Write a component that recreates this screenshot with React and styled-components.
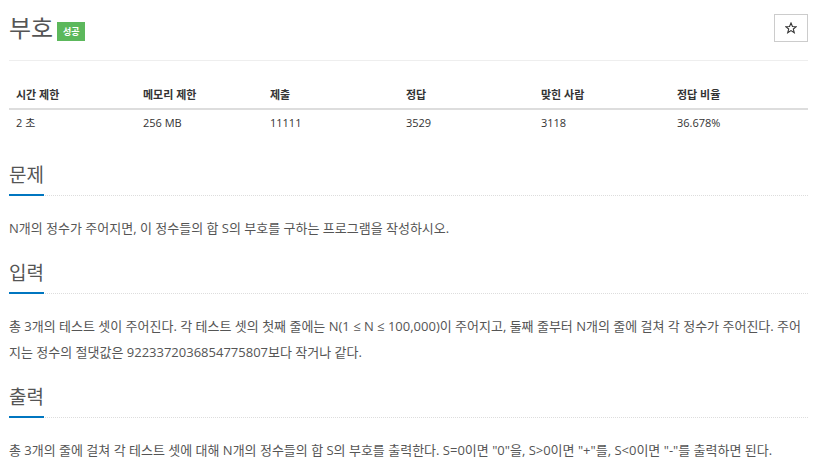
import React from "react";
import styled, { createGlobalStyle } from "styled-components";

const Global = createGlobalStyle`
  html, body { margin: 0; padding: 0; background: #fff; }
  body {
    font-family: "Open Sans", "Noto Sans CJK KR", sans-serif;
    color: #555;
  }
`;

const Page = styled.div`
  padding: 0 9px;
  width: 799px;
`;

const Header = styled.div`
  display: flex;
  align-items: flex-start;
  justify-content: space-between;
  padding-top: 14px;
  height: 46px;
  border-bottom: 1px solid #eee;
`;

const TitleWrap = styled.div`
  display: flex;
  align-items: center;
  gap: 4px;
`;

const Title = styled.h1`
  margin: 0;
  font-size: 24px;
  font-weight: 400;
  line-height: 28px;
  color: #555;
`;

const Badge = styled.span`
  display: inline-flex;
  align-items: center;
  justify-content: center;
  width: 28px;
  height: 19px;
  margin-top: 7px;
  background: #5cb85c;
  color: #fff;
  font-size: 9px;
  font-weight: 700;
`;

const StarButton = styled.button`
  width: 34px;
  height: 28px;
  border: 1px solid #ccc;
  background: #fff;
  padding: 0;
  display: flex;
  align-items: center;
  justify-content: center;
`;

const Table = styled.table`
  width: 100%;
  border-collapse: collapse;
  margin-top: 18px;
  table-layout: fixed;
  font-size: 11px;
`;

const Th = styled.th`
  text-align: left;
  font-weight: 700;
  padding: 8px 7px 5px;
  line-height: 16px;
  border-bottom: 2px solid #ddd;
  color: #333;
`;

const Td = styled.td`
  padding: 5px 7px 8px;
  line-height: 16px;
  color: #333;
`;

const Section = styled.section`
  margin-top: ${(p) => p.$top}px;
`;

const HeadingRow = styled.div`
  display: flex;
  border-bottom: 1px dotted #ddd;
`;

const Heading = styled.h2`
  margin: 0 0 -1px;
  font-size: 19px;
  font-weight: 400;
  line-height: 24px;
  padding-bottom: 7px;
  color: #555;
  border-bottom: 2px solid #0076c0;
  min-width: 32px;
`;

const Text = styled.p`
  margin: ${(p) => p.$top}px 0 0;
  font-size: 13px;
  line-height: 26px;
  color: #555;
`;

const columns = [
  ["시간 제한", "2 초", 127],
  ["메모리 제한", "256 MB", 127],
  ["제출", "11111", 136],
  ["정답", "3529", 135],
  ["맞힌 사람", "3118", 136],
  ["정답 비율", "36.678%", 138],
];

const StarIcon = () => (
  <svg width="12" height="12" viewBox="0 0 24 24" fill="none" stroke="#333" strokeWidth="2.2" strokeLinejoin="miter">
    <polygon points="12,2 14.9,9 22.5,9.3 16.6,14.1 18.6,21.5 12,17.3 5.4,21.5 7.4,14.1 1.5,9.3 9.1,9" />
  </svg>
);

export default function App() {
  return (
    <Page>
      <Global />
      <Header>
        <TitleWrap>
          <Title>부호</Title>
          <Badge>성공</Badge>
        </TitleWrap>
        <StarButton aria-label="즐겨찾기">
          <StarIcon />
        </StarButton>
      </Header>
      <Table>
        <colgroup>
          {columns.map((c) => (
            <col key={c[0]} style={{ width: c[2] }} />
          ))}
        </colgroup>
        <thead>
          <tr>
            {columns.map((c) => (
              <Th key={c[0]}>{c[0]}</Th>
            ))}
          </tr>
        </thead>
        <tbody>
          <tr>
            {columns.map((c) => (
              <Td key={c[0]}>{c[1]}</Td>
            ))}
          </tr>
        </tbody>
      </Table>
      <Section $top={24}>
        <HeadingRow>
          <Heading>문제</Heading>
        </HeadingRow>
        <Text $top={19}>
          N개의 정수가 주어지면, 이 정수들의 합 S의 부호를 구하는 프로그램을 작성하시오.
        </Text>
      </Section>
      <Section $top={20}>
        <HeadingRow>
          <Heading>입력</Heading>
        </HeadingRow>
        <Text $top={19}>
          총 3개의 테스트 셋이 주어진다. 각 테스트 셋의 첫째 줄에는 N(1 ≤ N ≤ 100,000)이 주어지고, 둘째 줄부터 N개의 줄에 걸쳐 각 정수가 주어진다. 주어지는 정수의 절댓값은 9223372036854775807보다 작거나 같다.
        </Text>
      </Section>
      <Section $top={20}>
        <HeadingRow>
          <Heading>출력</Heading>
        </HeadingRow>
        <Text $top={19}>
          총 3개의 줄에 걸쳐 각 테스트 셋에 대해 N개의 정수들의 합 S의 부호를 출력한다. S=0이면 "0"을, S&gt;0이면 "+"를, S&lt;0이면 "-"를 출력하면 된다.
        </Text>
      </Section>
    </Page>
  );
}
